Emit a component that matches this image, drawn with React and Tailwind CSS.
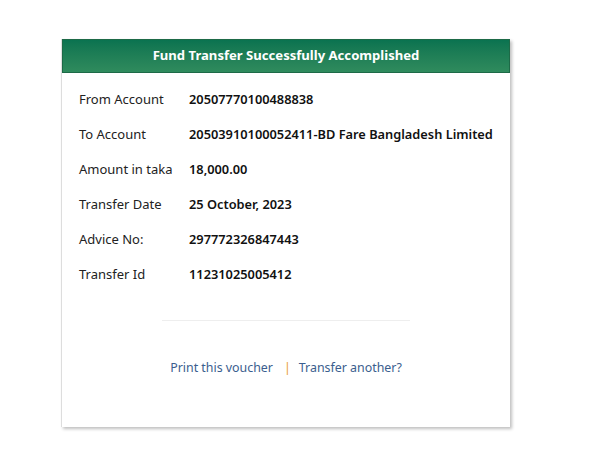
const rows = [
  ["From Account", "20507770100488838"],
  ["To Account", "20503910100052411-BD Fare Bangladesh Limited"],
  ["Amount in taka", "18,000.00"],
  ["Transfer Date", "25 October, 2023"],
  ["Advice No:", "297772326847443"],
  ["Transfer Id", "11231025005412"],
];

export default function App() {
  return (
    <div className="min-h-[472px] w-[595px] bg-white pt-[39px] pl-[61px] font-['Noto_Sans',sans-serif]">
      <div className="w-[449px] h-[388px] bg-white border-l border-[#ddd] shadow-[2px_2px_3px_rgba(0,0,0,0.25)]">
        <div className="h-[34px] flex items-center justify-center bg-gradient-to-b from-[#0a7350] to-[#2f8b5d] border border-[#1d6a47] text-white text-[13.1px] font-bold">
          Fund Transfer Successfully Accomplished
        </div>
        <div className="pt-[9px] pl-[17px]">
          {rows.map(([label, value]) => (
            <div key={label} className="flex items-center h-[35px] text-[13px]">
              <div className="w-[110px] text-[#222]">{label}</div>
              <div className="font-semibold text-[12.8px] text-[#111]">{value}</div>
            </div>
          ))}
        </div>
        <div className="mt-[28px] mx-auto w-[248px] border-t border-[#eee]"></div>
        <div className="mt-[38px] flex items-center justify-center gap-[8px] text-[12.4px] text-[#3b5e8e]">
          <span className="mr-[3px]">Print this voucher</span>
          <span className="text-[#e89a30]">|</span>
          <span>Transfer another?</span>
        </div>
      </div>
    </div>
  );
}
